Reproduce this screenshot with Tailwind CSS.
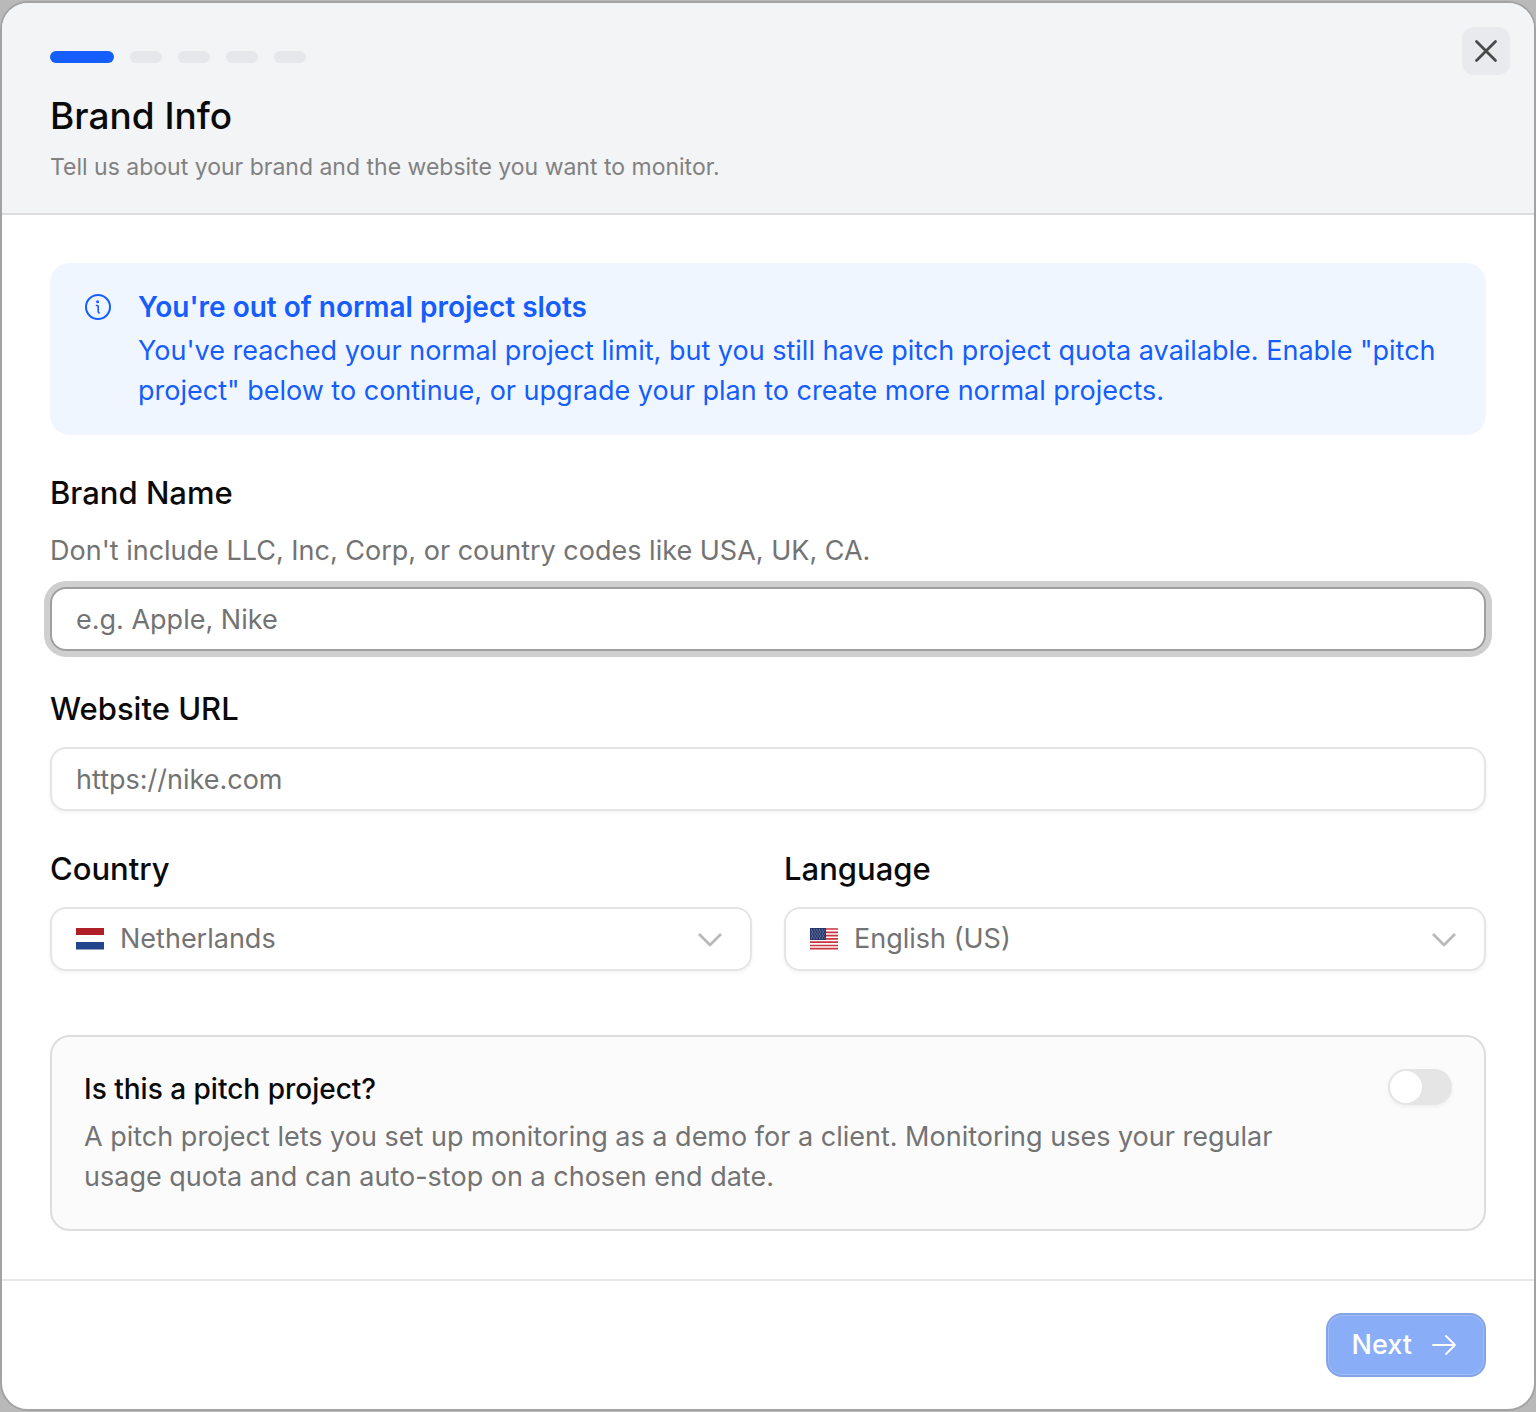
<!DOCTYPE html>
<html lang="en">
<head>
    <meta charset="UTF-8">
    <meta name="viewport" content="width=device-width, initial-scale=1.0">
    <title>Brand Info</title>
    <script src="https://cdn.jsdelivr.net/npm/@tailwindcss/browser@4"></script>
</head>
<body class="bg-[#b9b9b9] py-px font-['Inter',sans-serif] text-[27px] leading-10 text-neutral-950">

    <!-- Dialog -->
    <form role="dialog" aria-labelledby="dialog-title" class="w-full overflow-hidden rounded-[28px] border-2 border-[#a3a3a3] bg-white">

        <!-- Header with step indicator -->
        <header class="flex items-start justify-between border-b-2 border-[#dddddf] bg-[#f3f4f6] pl-12 pr-6">
            <div class="pt-12 pb-7">
                <div class="flex gap-4">
                    <span class="h-3 w-16 rounded-full bg-[#155dfc]"></span>
                    <span class="h-3 w-8 rounded-full bg-gray-200"></span>
                    <span class="h-3 w-8 rounded-full bg-gray-200"></span>
                    <span class="h-3 w-8 rounded-full bg-gray-200"></span>
                    <span class="h-3 w-8 rounded-full bg-gray-200"></span>
                </div>
                <h1 id="dialog-title" class="mt-8 text-[37px] font-medium leading-[42px]">Brand Info</h1>
                <p class="mt-3 text-[23px] leading-9 text-[#818181]">Tell us about your brand and the website you want to monitor.</p>
            </div>
            <button type="button" aria-label="Close" class="mt-6 flex size-12 items-center justify-center rounded-xl bg-[#e9eaed] text-[#4a4a4a]">
                <svg class="size-6" viewBox="0 0 24 24" fill="none" stroke="currentColor" stroke-width="2.8" stroke-linecap="round"><path d="M2.500 2.500l19 19M21.500 2.500l-19 19"/></svg>
            </button>
        </header>

        <!-- Form fields -->
        <main class="flex flex-col gap-10 p-12">
            <div role="alert" class="flex gap-6 rounded-[20px] bg-[#eff6ff] px-8 py-6 text-[#155dfc]">
                <svg class="mt-1 size-8 shrink-0" viewBox="0 0 32 32" fill="none" stroke="currentColor" stroke-width="2"><circle cx="16" cy="16" r="12"/><path d="M14.500 14.500h.9c.5 0 .8.3.8.8v5c0 .9.2 1.500.9 1.600" stroke-width="1.600" stroke-linecap="round"/><circle cx="15.600" cy="10.800" r="1.500" fill="currentColor" stroke="none"/></svg>
                <div>
                    <h2 class="text-[28px] font-semibold leading-10">You're out of normal project slots</h2>
                    <p class="mt-1">You've reached your normal project limit, but you still have pitch project quota available. Enable "pitch project" below to continue, or upgrade your plan to create more normal projects.</p>
                </div>
            </div>

            <div>
                <label for="brand" class="block text-[31px] font-medium leading-9">Brand Name</label>
                <p id="brand-hint" class="mt-5 text-neutral-500">Don't include LLC, Inc, Corp, or country codes like USA, UK, CA.</p>
                <input id="brand" type="text" aria-describedby="brand-hint" placeholder="e.g. Apple, Nike" class="mt-4 block h-16 w-full rounded-2xl border-2 border-[#9f9f9f] bg-white px-6 outline-none ring-6 ring-[#cfcfcf] placeholder:text-neutral-500">
            </div>

            <div>
                <label for="url" class="block text-[31px] font-medium leading-9">Website URL</label>
                <input id="url" type="url" placeholder="https://nike.com" class="mt-5 block h-16 w-full rounded-2xl border-2 border-neutral-200 bg-white px-6 shadow-[0_2px_4px_rgb(0_0_0/0.05)] outline-none placeholder:text-neutral-500">
            </div>

            <div class="grid grid-cols-2 gap-8">
                <div>
                    <label for="country" class="block text-[31px] font-medium leading-9">Country</label>
                    <div class="relative mt-5 text-neutral-500">
                        <select id="country" class="block h-16 w-full appearance-none rounded-2xl border-2 border-neutral-200 bg-white pl-17 pr-16 shadow-[0_2px_4px_rgb(0_0_0/0.05)] outline-none">
                            <option>Netherlands</option>
                        </select>
                        <svg class="pointer-events-none absolute top-5 left-[26px] h-6 w-7" viewBox="0 0 28 24"><path fill="#ae1f28" d="M0 1h28v7H0z"/><path fill="#fff" d="M0 8h28v7H0z"/><path fill="#21468b" d="M0 15h28v7.500H0z"/></svg>
                        <svg class="pointer-events-none absolute top-5 right-7 size-7 text-[#b9b9b9]" viewBox="0 0 28 28" fill="none" stroke="currentColor" stroke-width="2.800" stroke-linejoin="round"><path d="M3 7l11 11L25 7"/></svg>
                    </div>
                </div>
                <div>
                    <label for="language" class="block text-[31px] font-medium leading-9">Language</label>
                    <div class="relative mt-5 text-neutral-500">
                        <select id="language" class="block h-16 w-full appearance-none rounded-2xl border-2 border-neutral-200 bg-white pl-17 pr-16 shadow-[0_2px_4px_rgb(0_0_0/0.05)] outline-none">
                            <option>English (US)</option>
                        </select>
                        <svg class="pointer-events-none absolute top-5 left-[26px] h-6 w-7" viewBox="0 0 28 24"><path fill="#fff" d="M0 1h28v21H0z"/><path stroke="#c8343f" stroke-width="1.700" d="M0 2h28M0 5.300h28M0 8.600h28M0 11.900h28M0 15.200h28M0 18.500h28M0 21.600h28"/><path fill="#26386f" d="M0 1h16v12H0z"/><path stroke="#a3acc6" stroke-width="1" stroke-dasharray="1 1.700" d="M1 3h14M2 5h13M1 7h14M2 9h13M1 11h14"/></svg>
                        <svg class="pointer-events-none absolute top-5 right-7 size-7 text-[#b9b9b9]" viewBox="0 0 28 28" fill="none" stroke="currentColor" stroke-width="2.800" stroke-linejoin="round"><path d="M3 7l11 11L25 7"/></svg>
                    </div>
                </div>
            </div>

            <div class="mt-6 flex items-start justify-between rounded-[20px] border-2 border-[#dddddd] bg-[#fbfbfb] p-8">
                <div class="max-w-[1240px]">
                    <label for="pitch" class="block text-[28px] font-medium leading-10">Is this a pitch project?</label>
                    <p id="pitch-hint" class="mt-2 text-neutral-500">A pitch project lets you set up monitoring as a demo for a client. Monitoring uses your regular usage quota and can auto-stop on a chosen end date.</p>
                </div>
                <input id="pitch" type="checkbox" role="switch" aria-describedby="pitch-hint" class="flex h-9 w-16 shrink-0 appearance-none items-center rounded-full bg-[#e5e5e5] px-0.5 shadow-[0_2px_4px_rgb(0_0_0/0.05)] before:size-8 before:rounded-full before:bg-white checked:justify-end checked:bg-[#155dfc]">
            </div>
        </main>

        <!-- Footer -->
        <footer class="flex justify-end border-t-2 border-gray-200 px-12 py-8">
            <button type="submit" class="flex h-16 items-center gap-4 rounded-2xl border-2 border-[#84a4e6] bg-[#8aadf8] px-6 font-medium text-white inset-ring-1 inset-ring-white/20">
                Next
                <svg class="size-8" viewBox="0 0 32 32" fill="none" stroke="currentColor" stroke-width="1.800" stroke-linecap="round" stroke-linejoin="round"><path d="M5 16h22M18 7l9 9-9 9"/></svg>
            </button>
        </footer>
    </form>

</body>
</html>
